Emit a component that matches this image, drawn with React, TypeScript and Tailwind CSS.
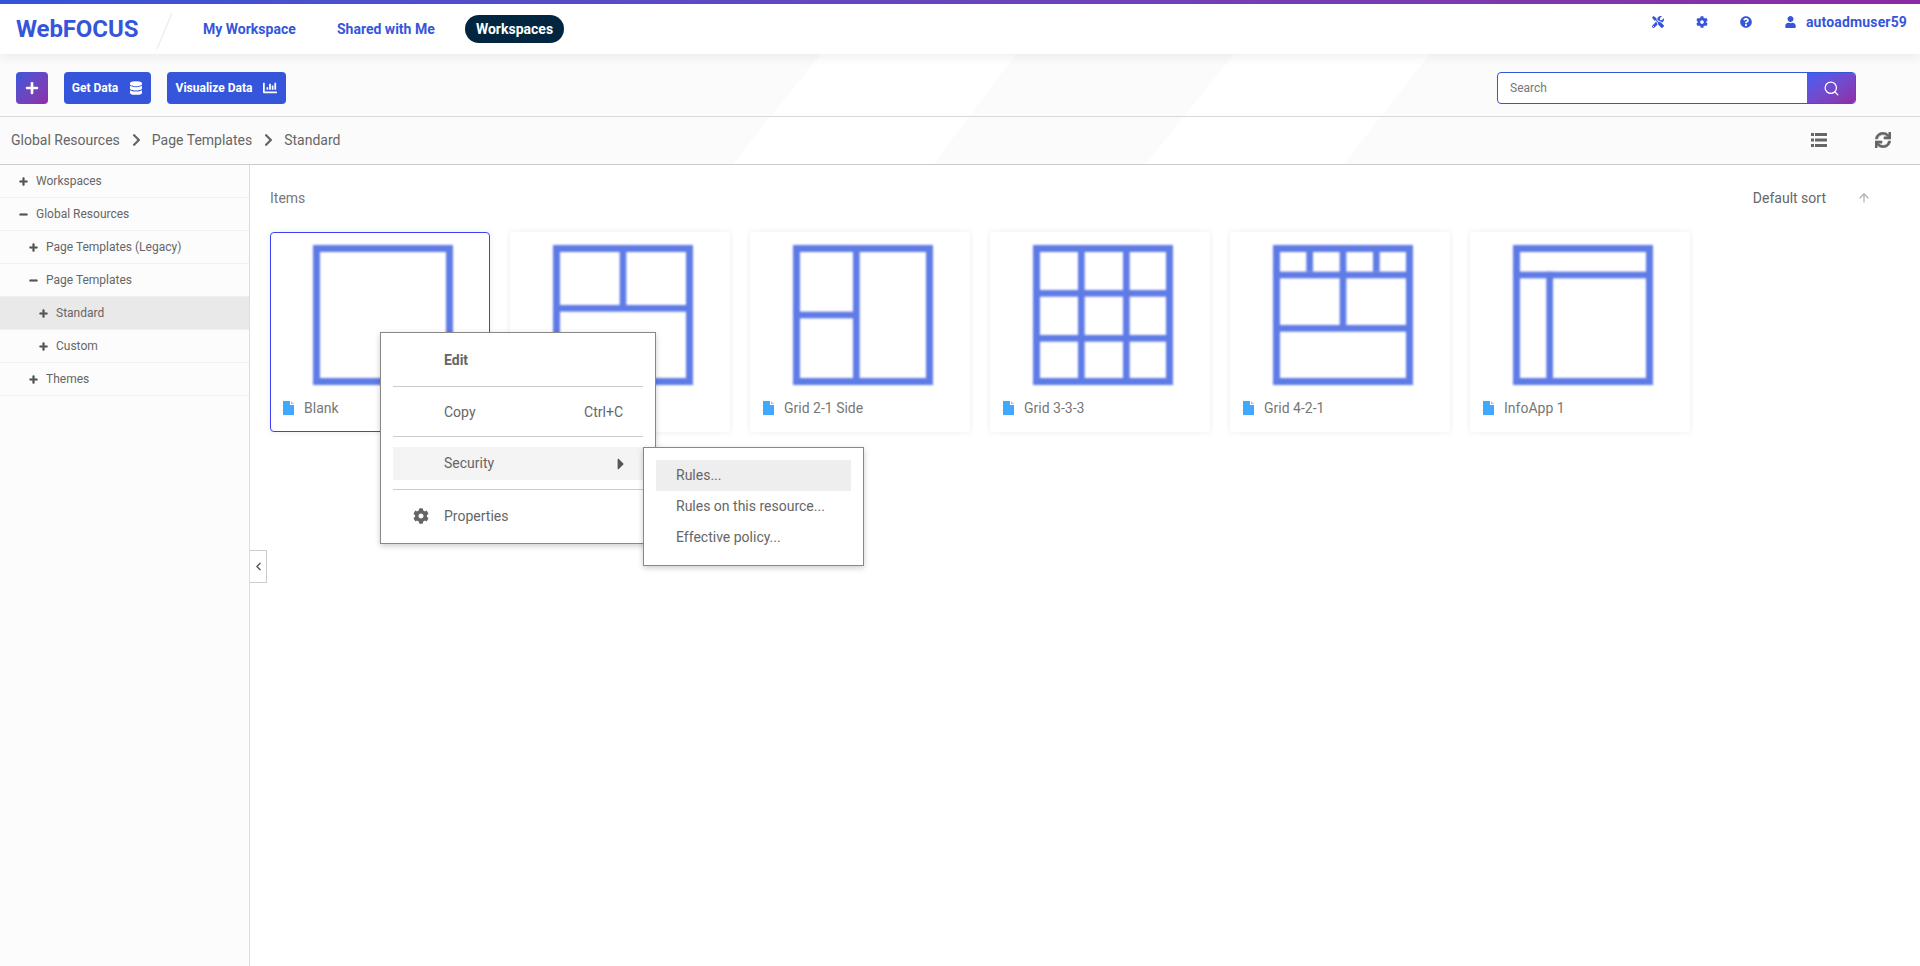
import { ArrowUp, ChevronLeft, Search } from 'lucide-react';
import {
  FaCaretRight,
  FaChartBar,
  FaChevronRight,
  FaCog,
  FaDatabase,
  FaMinus,
  FaPlus,
  FaQuestionCircle,
  FaSync,
  FaTools,
  FaUser,
} from 'react-icons/fa';

type Bar = [number, number, number, number];

// thumbnails sit on a 21 unit grid, every line is one unit thick
const templates: { name: string; bars: Bar[]; selected?: boolean }[] = [
  { name: 'Blank', bars: [], selected: true },
  { name: 'Grid 2-1', bars: [[0, 9, 21, 1], [10, 0, 1, 9]] },
  { name: 'Grid 2-1 Side', bars: [[9, 0, 1, 21], [0, 10, 9, 1]] },
  {
    name: 'Grid 3-3-3',
    bars: [[6.75, 0, 1, 21], [13.5, 0, 1, 21], [0, 6.75, 21, 1], [0, 13.5, 21, 1]],
  },
  {
    name: 'Grid 4-2-1',
    bars: [[5, 0, 1, 4], [10, 0, 1, 12], [15, 0, 1, 4], [0, 4, 21, 1], [0, 12, 21, 1]],
  },
  { name: 'InfoApp 1', bars: [[0, 4, 21, 1], [5, 4, 1, 17]] },
];

const tree = [
  { label: 'Workspaces', pad: 'pl-[19px]', open: false },
  { label: 'Global Resources', pad: 'pl-[19px]', open: true },
  { label: 'Page Templates (Legacy)', pad: 'pl-[29px]', open: false },
  { label: 'Page Templates', pad: 'pl-[29px]', open: true },
  { label: 'Standard', pad: 'pl-[39px]', open: false, active: true },
  { label: 'Custom', pad: 'pl-[39px]', open: false },
  { label: 'Themes', pad: 'pl-[29px]', open: false },
];

function Thumb({ bars }: { bars: Bar[] }) {
  return (
    <div className="w-[140px] h-[140px] blur-[0.8px]">
      <svg viewBox="0 0 21 21" className="block w-full h-full" fill="#5f7be6">
        <rect x="0" y="0" width="21" height="1.05" />
        <rect x="0" y="19.95" width="21" height="1.05" />
        <rect x="0" y="0" width="1.05" height="21" />
        <rect x="19.95" y="0" width="1.05" height="21" />
        {bars.map((b, i) => (
          <rect key={i} x={b[0]} y={b[1]} width={b[2]} height={b[3]} />
        ))}
      </svg>
    </div>
  );
}

function FileIcon() {
  return (
    <svg width="11" height="14" viewBox="0 0 11 14" className="shrink-0">
      <path d="M0 0H7V4H11V14H0Z" fill="#3fa9ff" />
      <path d="M8 0L11 3H8Z" fill="#8ccbff" />
    </svg>
  );
}

function ListIcon() {
  return (
    <svg width="16" height="14" viewBox="0 0 16 14" fill="#666">
      <rect x="0" y="0" width="3" height="3" />
      <rect x="4" y="0" width="12" height="3" />
      <rect x="0" y="5.5" width="3" height="3" />
      <rect x="4" y="5.5" width="12" height="3" />
      <rect x="0" y="11" width="3" height="3" />
      <rect x="4" y="11" width="12" height="3" />
    </svg>
  );
}

function TemplateCard({ name, bars, selected }: { name: string; bars: Bar[]; selected?: boolean }) {
  return (
    <div
      className={
        'w-[220px] h-[200px] rounded bg-white border pt-3 shadow-[0_0_6px_rgba(0,0,0,0.08)] ' +
        (selected ? 'border-[#3f3ff5]' : 'border-transparent')
      }
    >
      <div className="flex justify-center pl-[6px]">
        <Thumb bars={bars} />
      </div>
      <div className="flex items-center mt-4 h-[14px] pl-3 text-sm text-[#777]">
        <FileIcon />
        <span className="ml-[10px]">{name}</span>
      </div>
    </div>
  );
}

function ContextMenu() {
  return (
    <div className="absolute left-[380px] top-[332px] w-[276px] h-[212px] bg-white border border-[#888] px-3 text-sm text-[#666] shadow-[0_2px_6px_rgba(0,0,0,0.2)]">
      <div className="h-[53px] flex items-center pl-[51px] font-bold">Edit</div>
      <div className="h-px bg-[#ccc]" />
      <div className="h-[49px] flex items-center justify-between pl-[51px] pr-5">
        <span>Copy</span>
        <span>Ctrl+C</span>
      </div>
      <div className="h-px bg-[#ccc]" />
      <div className="mt-[10px] h-[33px] flex items-center justify-between pl-[51px] pr-[17px] bg-[#f4f4f4]">
        <span className="-mt-px">Security</span>
        <FaCaretRight className="w-[10px] h-[18px] text-[#555]" />
      </div>
      <div className="mt-[9px] h-px bg-[#ccc]" />
      <div className="h-[52px] flex items-center pl-5">
        <FaCog className="w-4 h-4 text-[#666]" />
        <span className="ml-[15px] -mt-px">Properties</span>
      </div>

      <div className="absolute left-[262px] top-[114px] w-[221px] h-[119px] bg-white border border-[#888] p-3 shadow-[0_2px_6px_rgba(0,0,0,0.2)]">
        <div className="h-[31px] flex items-center pl-5 pb-0.5 bg-[#eee]">Rules...</div>
        <div className="h-[31px] flex items-center pl-5 pb-0.5">Rules on this resource...</div>
        <div className="h-[31px] flex items-center pl-5 pb-0.5">Effective policy...</div>
      </div>
    </div>
  );
}

export default function App() {
  return (
    <div className="relative h-[966px] overflow-hidden flex flex-col bg-white font-['Roboto',sans-serif] text-[#666]">
      <div className="h-1 shrink-0 bg-gradient-to-r from-[#3556db] to-[#8e2ba6]" />

      <header className="relative z-10 h-[50px] shrink-0 flex items-start bg-white pl-4 pr-[13px] shadow-[0_2px_12px_rgba(0,0,0,0.08)]">
        <div className="h-[50px] flex items-center text-[#3556db]">
          <span className="w-[124px] text-2xl font-bold tracking-[-0.1px]">WebFOCUS</span>
          <svg width="17" height="38" viewBox="0 0 17 38" className="ml-4 mt-1">
            <line x1="16" y1="1" x2="1" y2="37" stroke="#eee" strokeWidth="1.5" />
          </svg>
          <nav className="flex items-center text-sm font-bold">
            <a className="ml-[30px] w-[134px]">My Workspace</a>
            <a className="w-[128px]">Shared with Me</a>
            <a className="h-7 w-[99px] flex items-center justify-center rounded-full bg-[#02263f] text-white">Workspaces</a>
          </nav>
        </div>
        <div className="ml-auto h-9 flex items-center text-[#3556db]">
          <FaTools className="w-3 h-3" />
          <FaCog className="ml-8 w-3 h-3" />
          <FaQuestionCircle className="ml-8 w-3 h-3" />
          <FaUser className="ml-[33px] w-[11px] h-3" />
          <span className="ml-[10px] text-sm font-bold tracking-[0.15px]">autoadmuser59</span>
        </div>
      </header>

      <div className="relative shrink-0">
        {/* faint slanted bands behind both bars */}
        <svg className="absolute inset-0 w-full h-full" viewBox="0 0 1920 111" preserveAspectRatio="none">
          <rect width="1920" height="111" fill="#fbfbfb" />
          <polygon points="821,0 1016,0 933,111 732,111" fill="#ffffff" />
          <polygon points="1234,0 1430,0 1343,111 1145,111" fill="#ffffff" />
        </svg>

        <div className="relative h-[63px] flex items-start pt-[18px] px-4 border-b border-[#d9d9d9]">
          <button className="w-8 h-8 flex items-center justify-center rounded bg-gradient-to-br from-[#3556db] to-[#8e2ba6] text-white">
            <FaPlus className="w-[14px] h-[14px]" />
          </button>
          <button className="ml-4 w-[87px] h-8 flex items-center justify-center gap-3 rounded bg-[#3556db] text-white text-xs font-bold -indent-px">
            Get Data
            <FaDatabase className="w-3 h-[14px]" />
          </button>
          <button className="ml-4 w-[119px] h-8 flex items-center justify-center gap-[11px] rounded bg-[#3556db] text-white text-xs font-bold">
            Visualize Data
            <FaChartBar className="w-[14px] h-[14px]" />
          </button>
          <div className="ml-auto mr-12 w-[359px] h-8 flex rounded border border-[#3556db] bg-white overflow-hidden">
            <div className="flex-1 flex items-center pl-3 text-xs text-[#777]">Search</div>
            <div className="w-[48px] flex items-center justify-center bg-gradient-to-br from-[#3f5ff5] to-[#8e2ba6] text-white">
              <Search size={17} strokeWidth={1.75} />
            </div>
          </div>
        </div>

        <div className="relative h-[48px] flex items-center pl-[11px] pb-px border-b border-[#ccc] text-sm">
          <span>Global Resources</span>
          <FaChevronRight className="ml-[12px] w-[9px] h-[14px]" />
          <span className="ml-[11px]">Page Templates</span>
          <FaChevronRight className="ml-[12px] w-[9px] h-[14px]" />
          <span className="ml-[11px]">Standard</span>
          <div className="ml-auto flex items-center pr-[29px] text-[#666]">
            <ListIcon />
            <FaSync className="ml-12 w-4 h-4 stroke-current stroke-[20]" />
          </div>
        </div>
      </div>

      <div className="flex-1 flex min-h-0">
        <aside className="w-[250px] shrink-0 border-r border-[#ddd] bg-[#fcfcfc] text-xs">
          {tree.map((row) => (
            <div
              key={row.label}
              className={
                'h-[33px] flex items-center border-b border-[#f0f0f0] ' +
                row.pad +
                (row.active ? ' bg-[#e9e9e9] border-[#e0e0e0]' : '')
              }
            >
              {row.open ? (
                <FaMinus className="w-[9px] h-[9px] text-[#555] stroke-current stroke-[30]" />
              ) : (
                <FaPlus className="w-[9px] h-[9px] text-[#555] stroke-current stroke-[30]" />
              )}
              <span className="ml-2">{row.label}</span>
            </div>
          ))}
        </aside>

        <main className="flex-1 pl-5 pr-[49px] pt-[21px]">
          <div className="h-6 flex items-center text-sm">
            <span className="text-[#777]">Items</span>
            <span className="ml-auto">Default sort</span>
            <ArrowUp size={14} className="ml-[31px] text-[#aaa]" />
          </div>
          <div className="mt-[22px] flex gap-5">
            {templates.map((t) => (
              <TemplateCard key={t.name} {...t} />
            ))}
          </div>
        </main>
      </div>

      <ContextMenu />

      <div className="absolute left-[250px] top-[550px] w-[17px] h-[33px] flex items-center justify-center bg-white border border-l-0 border-[#ccc]">
        <ChevronLeft size={13} strokeWidth={2.5} className="text-[#555]" />
      </div>
    </div>
  );
}
